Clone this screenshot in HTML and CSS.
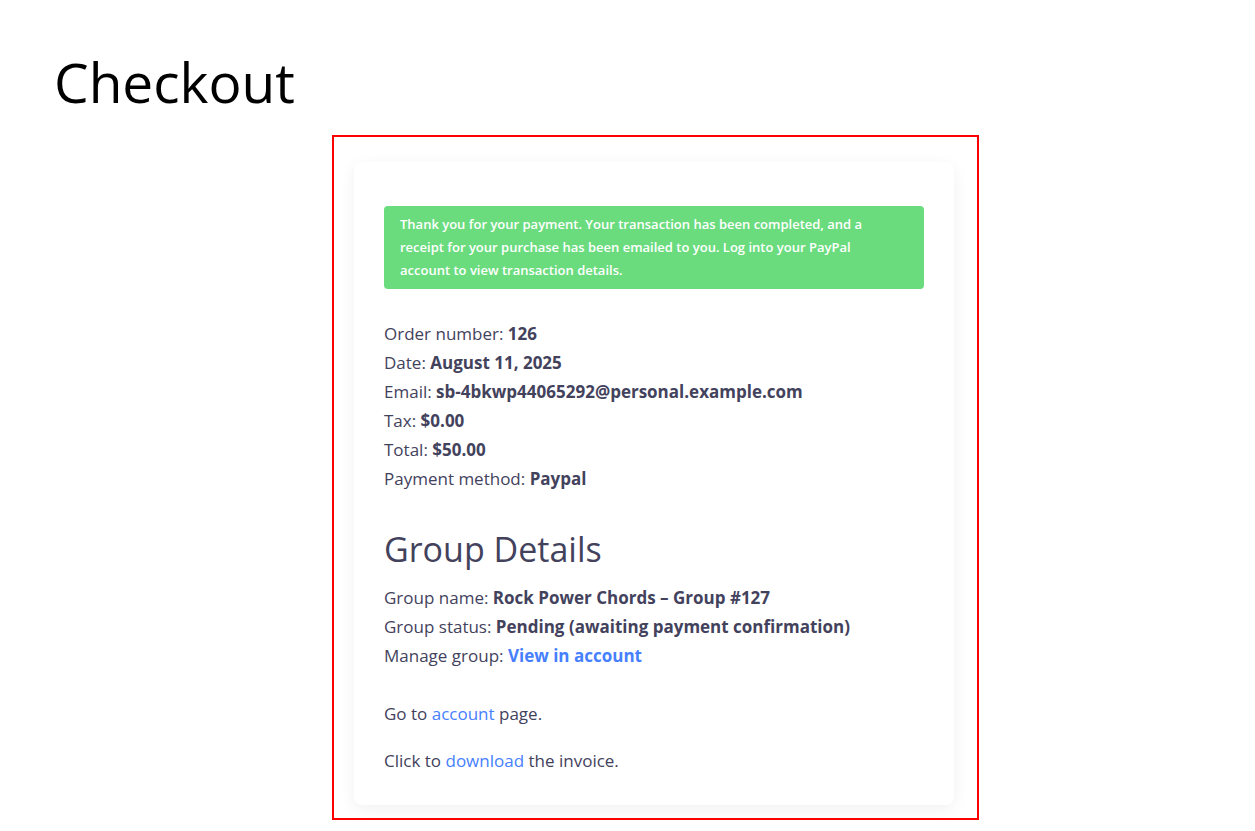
FILE: index.html
```
<!DOCTYPE html>
<html lang="en">
<head>
<meta charset="utf-8">
<meta name="viewport" content="width=device-width, initial-scale=1">
<title>Checkout</title>
<link rel="stylesheet" href="styles.css">
</head>
<body>
<main class="page">
  <h1 class="page-title">Checkout</h1>
  <div class="content">
    <div class="highlight">
      <section class="card">
        <p class="notice" role="status">Thank you for your payment. Your transaction has been completed, and a receipt for your purchase has been emailed to you. Log into your PayPal account to view transaction details.</p>
        <ul class="details">
          <li>Order number: <strong>126</strong></li>
          <li>Date: <strong>August 11, 2025</strong></li>
          <li>Email: <strong>sb-4bkwp44065292@personal.example.com</strong></li>
          <li>Tax: <strong>$0.00</strong></li>
          <li>Total: <strong>$50.00</strong></li>
          <li>Payment method: <strong>Paypal</strong></li>
        </ul>
        <h2 class="section-title">Group Details</h2>
        <ul class="details">
          <li>Group name: <strong>Rock Power Chords – Group #127</strong></li>
          <li>Group status: <strong>Pending (awaiting payment confirmation)</strong></li>
          <li>Manage group: <strong><a class="link" href="#account">View in account</a></strong></li>
        </ul>
        <p class="note">Go to <a class="link" href="#account">account</a> page.</p>
        <p class="note">Click to <a class="link" href="#invoice">download</a> the invoice.</p>
      </section>
    </div>
  </div>
</main>
</body>
</html>
```
FILE: styles.css
```
* { box-sizing: border-box; }
body {
  margin: 0;
  background: #fff;
  color: #43425d;
  font-family: "Segoe UI", "Open Sans", "Noto Sans", sans-serif;
  font-size: 17px;
  line-height: 29px;
}
.page { padding: 45px 0 11px; }
.page-title {
  margin: 0 0 16px;
  padding-left: 54px;
  color: #000;
  font-size: 55px;
  font-weight: 400;
  line-height: 74px;
}
.content { padding-left: 56px; }
.highlight {
  max-width: 647px;
  margin: 0 auto;
  padding: 25px 23px 13px 20px;
  border: 2px solid #f00;
}
.card {
  padding: 44px 30px 30px;
  border-radius: 8px;
  background: #fff;
  box-shadow: 0 4px 16px rgba(0, 0, 0, 0.06);
}
.notice {
  margin: 0 0 30px;
  padding: 7px 32px 7px 16px;
  border-radius: 4px;
  background: #6adc7e;
  color: #fff;
  font-size: 13px;
  font-weight: 600;
  line-height: 23px;
}
.details { margin: 0; padding: 0; list-style: none; }
.section-title {
  margin: 35px 0 12px;
  font-size: 34px;
  font-weight: 400;
  line-height: 43px;
}
.note { margin: 18px 0 0; }
.details + .note { margin-top: 29px; }
.link { color: #4680ff; text-decoration: none; }
```
